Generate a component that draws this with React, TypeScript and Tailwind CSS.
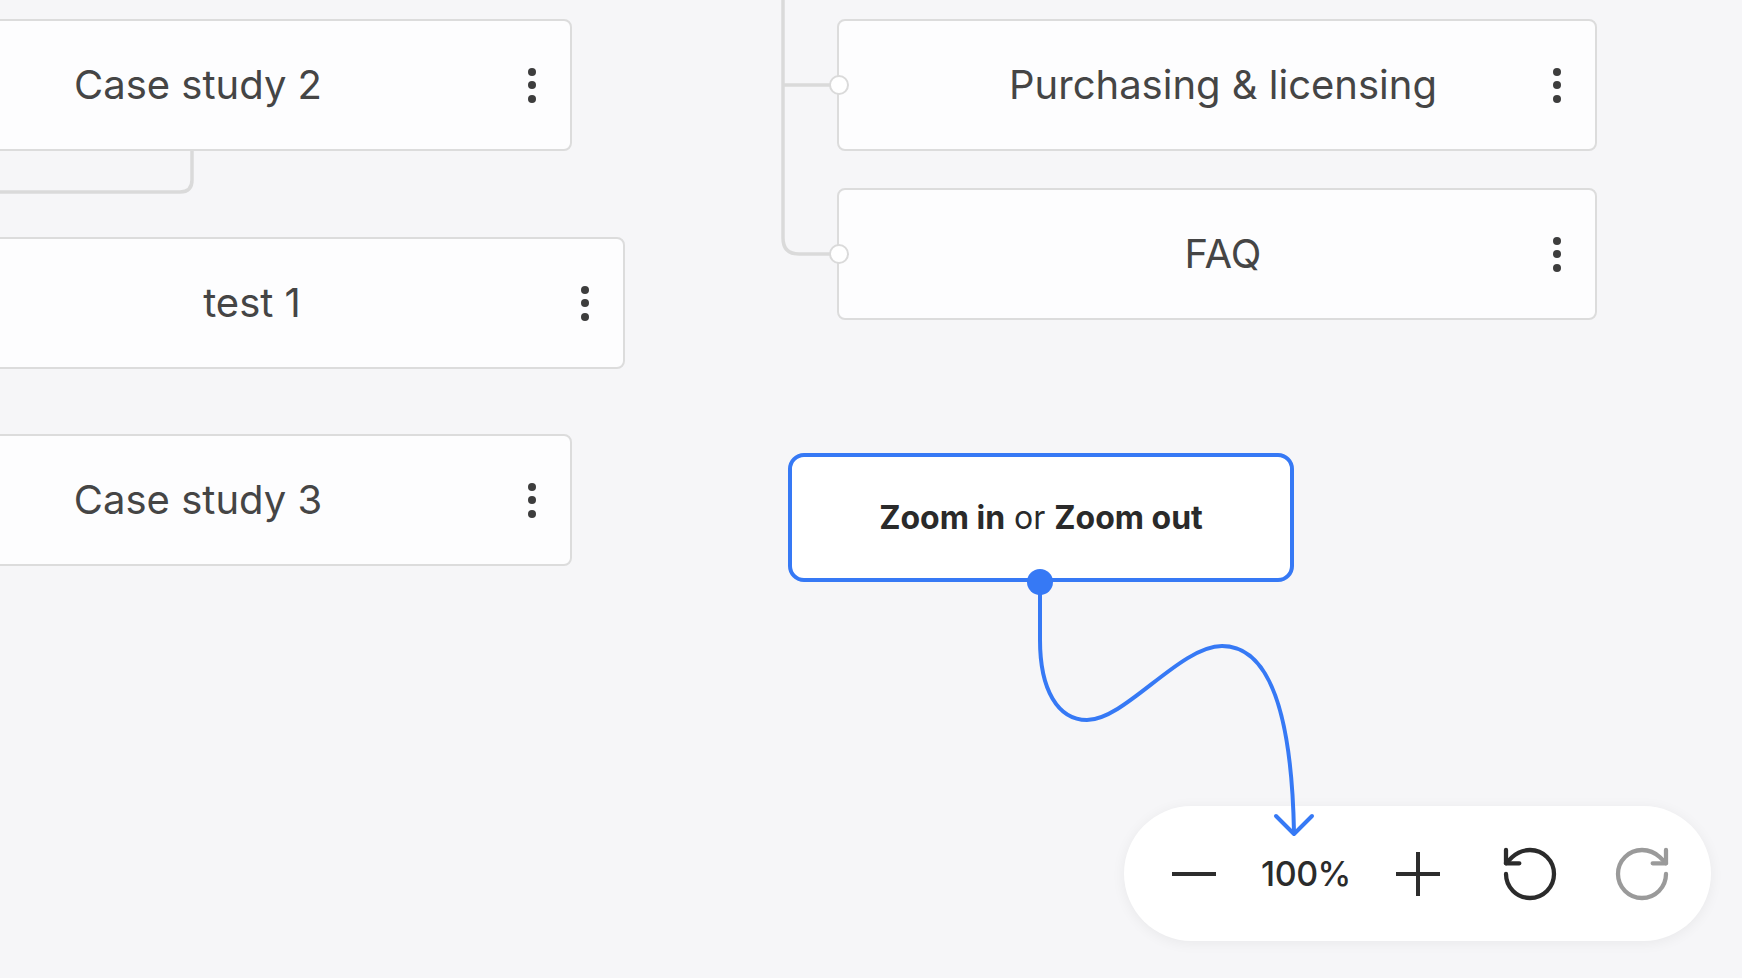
import { RotateCcw, RotateCw } from 'lucide-react';

interface NodeCardProps {
  label: string;
  left: number;
  top: number;
  width: number;
  offset?: number;
}

function Dots() {
  return (
    <div className="flex flex-col items-center gap-[5.5px]">
      <span className="w-2 h-2 rounded-full bg-[#3d3d3d]" />
      <span className="w-2 h-2 rounded-full bg-[#3d3d3d]" />
      <span className="w-2 h-2 rounded-full bg-[#3d3d3d]" />
    </div>
  );
}

function NodeCard({ label, left, top, width, offset = 76 }: NodeCardProps) {
  return (
    <div
      className="absolute h-[132px] flex items-center bg-[#fdfdfe] border-2 border-[#dcdcdc] rounded-lg"
      style={{ left, top, width }}
    >
      <div className="shrink-0" style={{ width: offset }} />
      <div className="flex-1 text-center text-[40px] leading-none text-[#454545] whitespace-nowrap">{label}</div>
      <div className="w-[76px] shrink-0 flex justify-center">
        <Dots />
      </div>
    </div>
  );
}

export default function App() {
  return (
    <div
      className="relative w-[1742px] h-[978px] overflow-hidden bg-[#f6f6f8]"
      style={{ fontFamily: 'Inter, "Noto Sans", sans-serif' }}
    >
      {/* tree connectors */}
      <svg className="absolute inset-0" width="1742" height="978" fill="none">
        <path d="M192 150 V180 Q192 192 180 192 H0" stroke="#dadada" strokeWidth="3.5" />
        <path d="M783 0 V238 Q783 254 799 254 H839" stroke="#dadada" strokeWidth="3.5" />
        <path d="M783 85 H839" stroke="#dadada" strokeWidth="3.5" />
      </svg>

      <NodeCard label="Case study 2" left={-176} top={19} width={748} />
      <NodeCard label="test 1" left={-121} top={237} width={746} />
      <NodeCard label="Case study 3" left={-176} top={434} width={748} />
      <NodeCard label="Purchasing & licensing" left={837} top={19} width={760} offset={88} />
      <NodeCard label="FAQ" left={837} top={188} width={760} offset={88} />

      <svg className="absolute inset-0 pointer-events-none" width="1742" height="978" fill="none">
        <circle cx="839" cy="85" r="9" fill="#ffffff" stroke="#dadada" strokeWidth="2" />
        <circle cx="839" cy="254" r="9" fill="#ffffff" stroke="#dadada" strokeWidth="2" />
      </svg>

      {/* tooltip node */}
      <div className="absolute left-[788px] top-[453px] w-[506px] h-[129px] flex items-center justify-center bg-white border-4 border-[#3679f5] rounded-2xl">
        <span className="text-[32px] text-[#2a2a2a] whitespace-nowrap">
          <b className="font-bold">Zoom in</b> or <b className="font-bold">Zoom out</b>
        </span>
      </div>

      {/* zoom toolbar */}
      <div className="absolute left-[1124px] top-[806px] w-[587px] h-[135px] flex items-center pl-[14px] bg-white rounded-full shadow-[0_2px_14px_rgba(0,0,0,0.06)]">
        <div className="w-[112px] flex justify-center">
          <div className="w-[44px] h-[4px] bg-[#2d2d2d]" />
        </div>
        <div className="w-[112px] flex justify-center text-[34px] font-medium tracking-[-0.5px] text-[#2b2b2b]">100%</div>
        <div className="w-[112px] flex justify-center">
          <svg width="44" height="44" viewBox="0 0 44 44">
            <path d="M22 0 V44 M0 22 H44" stroke="#2d2d2d" strokeWidth="4" />
          </svg>
        </div>
        <div className="w-[112px] flex justify-center">
          <RotateCcw size={64} strokeWidth={1.6} color="#2b2b2b" />
        </div>
        <div className="w-[112px] flex justify-center">
          <RotateCw size={64} strokeWidth={1.6} color="#9a9a9a" />
        </div>
      </div>

      {/* pointer from tooltip to toolbar */}
      <svg className="absolute inset-0 pointer-events-none" width="1742" height="978" fill="none">
        <path
          d="M1040 582 V640 C1040 690 1058 720 1087 720 C1125 720 1180 646 1222 646 C1275 646 1292 730 1294 832"
          stroke="#3679f5"
          strokeWidth="4"
          strokeLinecap="round"
        />
        <path d="M1276 816 L1294 834 L1312 816" stroke="#3679f5" strokeWidth="4" strokeLinecap="round" strokeLinejoin="round" />
        <circle cx="1040" cy="582" r="13" fill="#3679f5" />
      </svg>
    </div>
  );
}
